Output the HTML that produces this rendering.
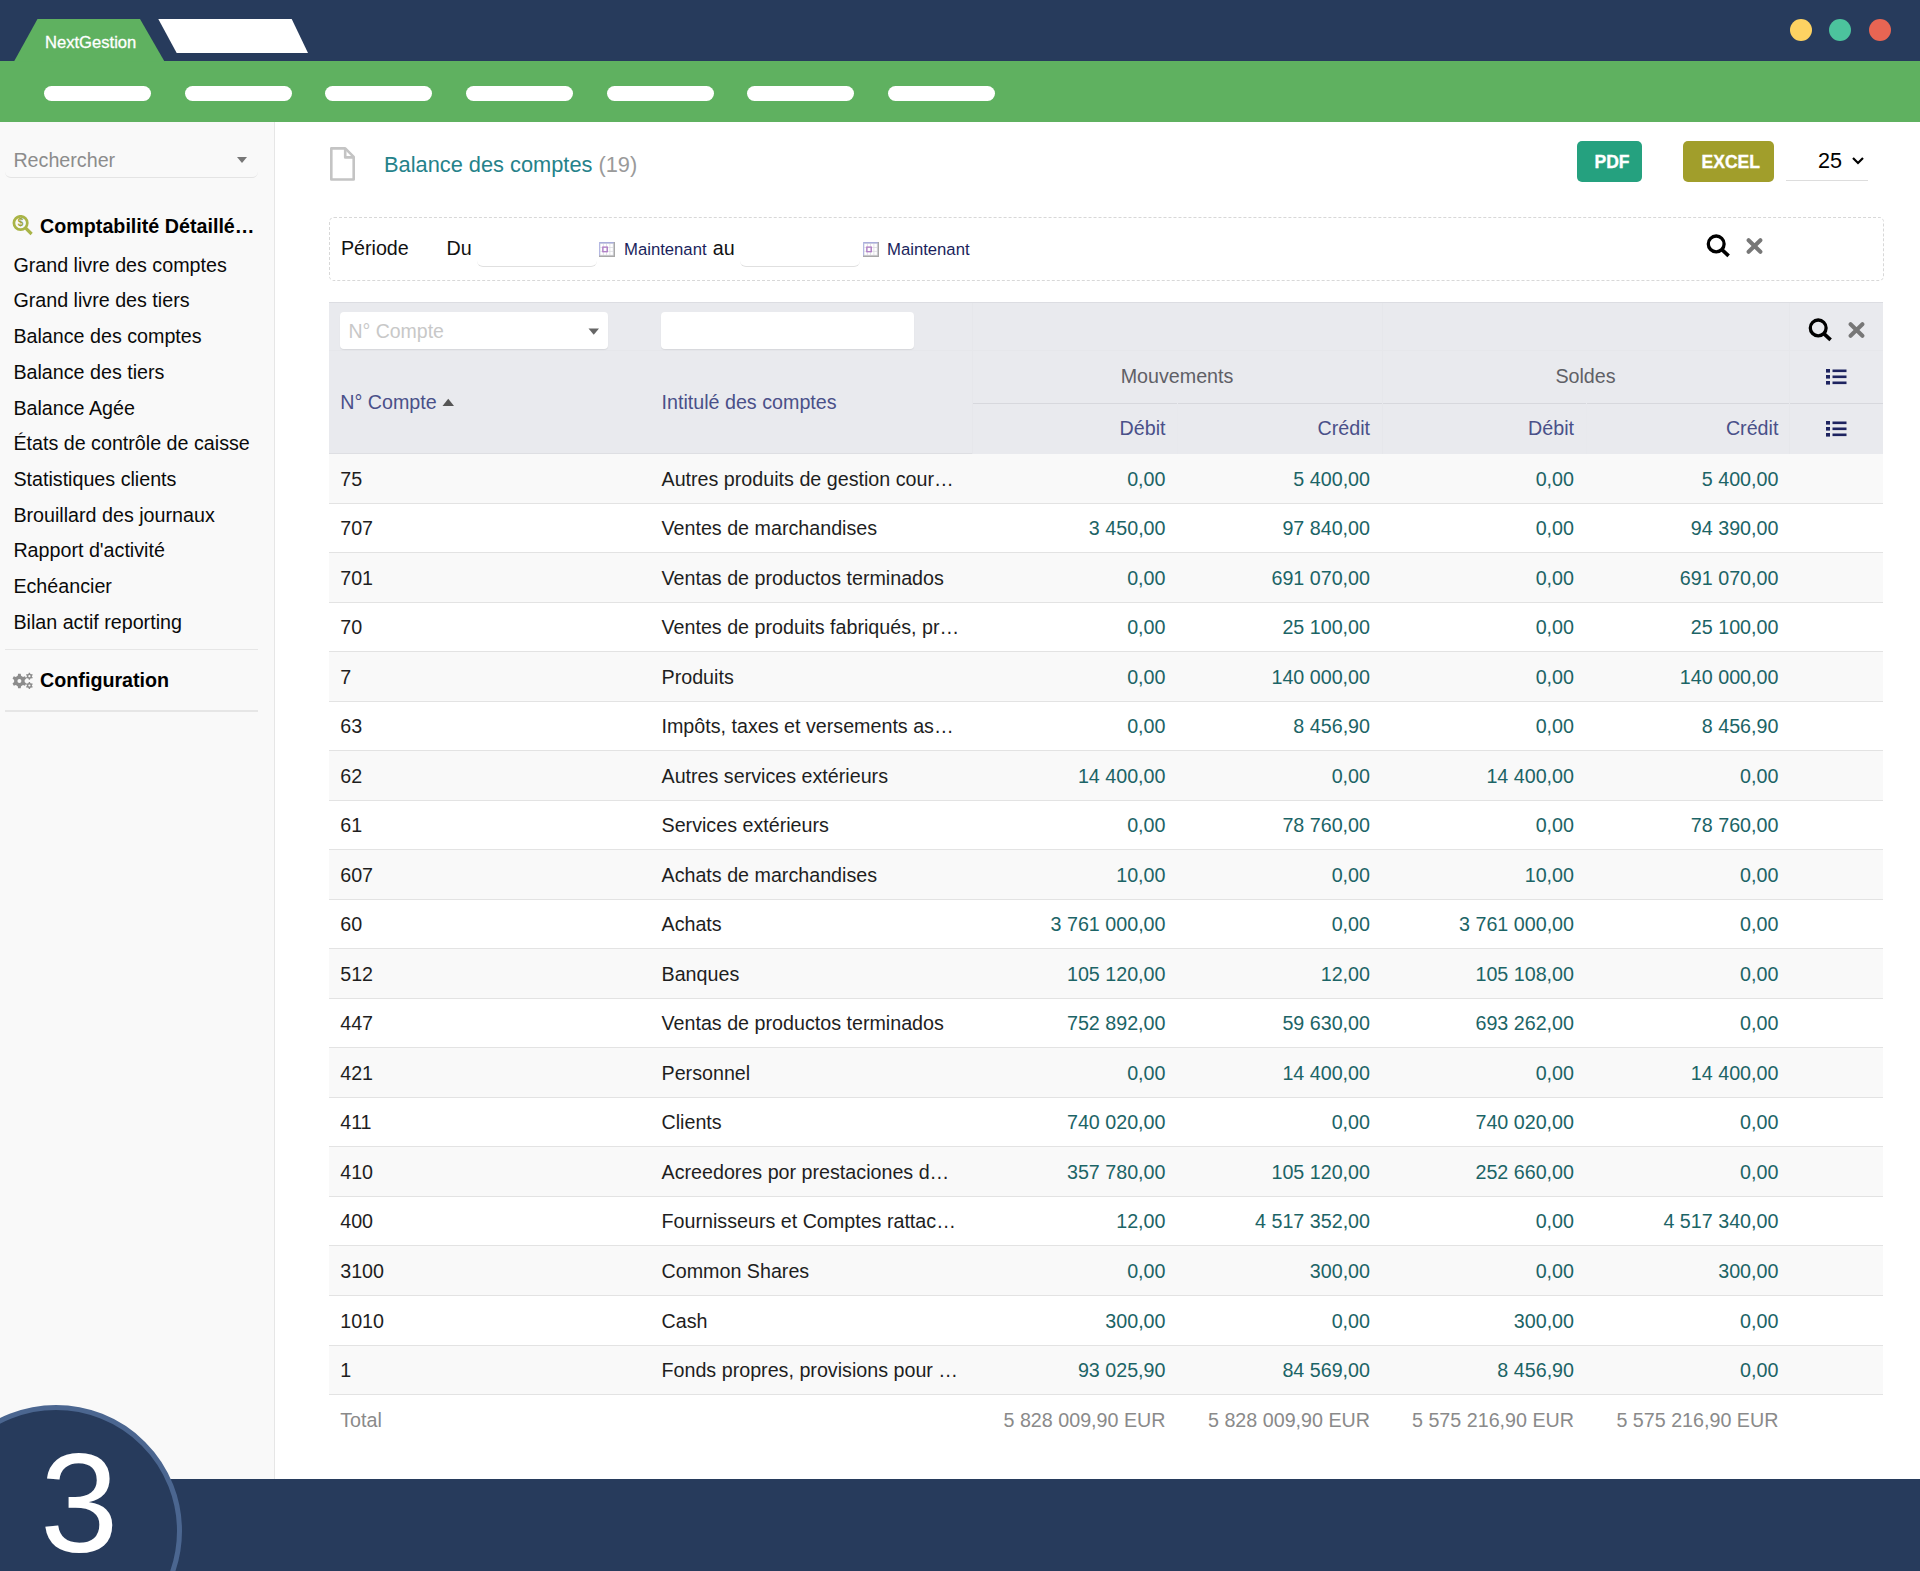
<!DOCTYPE html>
<html><head><meta charset="utf-8"><title>Balance des comptes</title>
<style>
html,body{margin:0;padding:0;}
body{width:1920px;height:1571px;position:relative;overflow:hidden;background:#fff;font-family:"Liberation Sans",sans-serif;}
.t{position:absolute;white-space:nowrap;line-height:1;}
svg{display:block}
</style></head><body>
<div style="position:absolute;left:0px;top:0px;width:1920px;height:61px;background:#273b5c"></div>
<div style="position:absolute;left:0px;top:61px;width:1920px;height:61px;background:#5fb160"></div>
<svg style="position:absolute;left:0;top:0" width="400" height="62"><polygon points="14,61.5 37.5,19 140,19 164.5,61.5" fill="#5fb160"/><polygon points="158.3,19 291.7,19 308,53 176.7,53" fill="#fff"/></svg>
<div class="t" style="left:45.00px;top:34.75px;font-size:16.6px;color:#fff;-webkit-text-stroke:0.3px #fff;">NextGestion</div>
<div style="position:absolute;left:44.0px;top:86px;width:107px;height:15px;background:#fff;border-radius:8px"></div>
<div style="position:absolute;left:184.67px;top:86px;width:107px;height:15px;background:#fff;border-radius:8px"></div>
<div style="position:absolute;left:325.34px;top:86px;width:107px;height:15px;background:#fff;border-radius:8px"></div>
<div style="position:absolute;left:466.01px;top:86px;width:107px;height:15px;background:#fff;border-radius:8px"></div>
<div style="position:absolute;left:606.68px;top:86px;width:107px;height:15px;background:#fff;border-radius:8px"></div>
<div style="position:absolute;left:747.35px;top:86px;width:107px;height:15px;background:#fff;border-radius:8px"></div>
<div style="position:absolute;left:888.02px;top:86px;width:107px;height:15px;background:#fff;border-radius:8px"></div>
<div style="position:absolute;left:1790px;top:19px;width:22px;height:22px;background:#fdd262;border-radius:50%"></div>
<div style="position:absolute;left:1829px;top:19px;width:22px;height:22px;background:#4cc39d;border-radius:50%"></div>
<div style="position:absolute;left:1869px;top:19px;width:22px;height:22px;background:#e86553;border-radius:50%"></div>
<div style="position:absolute;left:0px;top:122px;width:274px;height:1357px;background:#f9f9f9"></div>
<div style="position:absolute;left:274px;top:122px;width:1px;height:1357px;background:#e6e6e6"></div>
<div class="t" style="left:13.40px;top:151.02px;font-size:19.7px;color:#8c8c8c;">Rechercher</div>
<svg style="position:absolute;left:236px;top:156px" width="12" height="8"><polygon points="1,1 11,1 6,7" fill="#777"/></svg>
<div style="position:absolute;left:5px;top:168px;width:253px;height:10px;box-sizing:border-box;border-bottom:1.8px solid #e4e4e4;border-radius:0 0 6px 6px"></div>
<svg style="position:absolute;left:12px;top:215px" width="22" height="21" viewBox="0 0 22 21">
<circle cx="8.6" cy="8" r="6.7" fill="none" stroke="#a9b447" stroke-width="2.7"/>
<line x1="13.2" y1="12.6" x2="19.6" y2="19" stroke="#a9b447" stroke-width="3.2"/>
<text x="8.6" y="11.2" font-size="10" font-weight="bold" text-anchor="middle" fill="#9aa43f" font-family="Liberation Sans">$</text>
</svg>
<div class="t" style="left:40.10px;top:216.92px;font-size:19.7px;color:#000;font-weight:bold;">Comptabilité Détaillé…</div>
<div class="t" style="left:13.40px;top:255.62px;font-size:19.7px;color:#0a0a0a;">Grand livre des comptes</div>
<div class="t" style="left:13.40px;top:291.35px;font-size:19.7px;color:#0a0a0a;">Grand livre des tiers</div>
<div class="t" style="left:13.40px;top:327.08px;font-size:19.7px;color:#0a0a0a;">Balance des comptes</div>
<div class="t" style="left:13.40px;top:362.81px;font-size:19.7px;color:#0a0a0a;">Balance des tiers</div>
<div class="t" style="left:13.40px;top:398.54px;font-size:19.7px;color:#0a0a0a;">Balance Agée</div>
<div class="t" style="left:13.40px;top:434.27px;font-size:19.7px;color:#0a0a0a;">États de contrôle de caisse</div>
<div class="t" style="left:13.40px;top:470.00px;font-size:19.7px;color:#0a0a0a;">Statistiques clients</div>
<div class="t" style="left:13.40px;top:505.73px;font-size:19.7px;color:#0a0a0a;">Brouillard des journaux</div>
<div class="t" style="left:13.40px;top:541.46px;font-size:19.7px;color:#0a0a0a;">Rapport d&#x27;activité</div>
<div class="t" style="left:13.40px;top:577.19px;font-size:19.7px;color:#0a0a0a;">Echéancier</div>
<div class="t" style="left:13.40px;top:612.92px;font-size:19.7px;color:#0a0a0a;">Bilan actif reporting</div>
<div style="position:absolute;left:5px;top:648.7px;width:253px;height:1.6px;background:#e6e6e6"></div>
<svg style="position:absolute;left:12px;top:672px" width="22" height="18" viewBox="0 0 22 18"><path fill-rule="evenodd" fill="#8c8c8c" d="M5.73 3.86 L6.11 1.82 L8.69 1.82 L9.07 3.86 L11.01 4.99 L12.98 4.29 L14.27 6.53 L12.68 7.88 L12.68 10.12 L14.27 11.47 L12.98 13.71 L11.01 13.01 L9.07 14.14 L8.69 16.18 L6.11 16.18 L5.73 14.14 L3.79 13.01 L1.82 13.71 L0.53 11.47 L2.12 10.12 L2.12 7.88 L0.53 6.53 L1.82 4.29 L3.79 4.99 Z M9.40 9.00 A2.0 2.0 0 1 0 5.40 9.00 A2.0 2.0 0 1 0 9.40 9.00 Z M16.60 1.73 L16.76 0.66 L18.04 0.66 L18.20 1.73 L19.14 2.27 L20.15 1.88 L20.79 2.98 L19.94 3.66 L19.94 4.74 L20.79 5.42 L20.15 6.52 L19.14 6.13 L18.20 6.67 L18.04 7.74 L16.76 7.74 L16.60 6.67 L15.66 6.13 L14.65 6.52 L14.01 5.42 L14.86 4.74 L14.86 3.66 L14.01 2.98 L14.65 1.88 L15.66 2.27 Z M18.50 4.20 A1.1 1.1 0 1 0 16.30 4.20 A1.1 1.1 0 1 0 18.50 4.20 Z M16.60 11.03 L16.76 9.96 L18.04 9.96 L18.20 11.03 L19.14 11.57 L20.15 11.18 L20.79 12.28 L19.94 12.96 L19.94 14.04 L20.79 14.72 L20.15 15.82 L19.14 15.43 L18.20 15.97 L18.04 17.04 L16.76 17.04 L16.60 15.97 L15.66 15.43 L14.65 15.82 L14.01 14.72 L14.86 14.04 L14.86 12.96 L14.01 12.28 L14.65 11.18 L15.66 11.57 Z M18.50 13.50 A1.1 1.1 0 1 0 16.30 13.50 A1.1 1.1 0 1 0 18.50 13.50 Z"/></svg>
<div class="t" style="left:40.10px;top:670.62px;font-size:19.7px;color:#000;font-weight:bold;">Configuration</div>
<div style="position:absolute;left:5px;top:710.3px;width:253px;height:1.6px;background:#e6e6e6"></div>
<svg style="position:absolute;left:329px;top:146px" width="28" height="37" viewBox="0 0 28 37">
<path d="M2.3 2.4 H16.2 L24.7 10.9 V33.5 H2.3 Z" fill="none" stroke="#c4c4c4" stroke-width="2.6" stroke-linejoin="round"/>
<path d="M16.2 2.4 V11.4 H24.7" fill="none" stroke="#c4c4c4" stroke-width="2.6" stroke-linejoin="round"/>
</svg>
<div class="t" style="left:384.00px;top:154.35px;font-size:21.8px;color:#25828a;">Balance des comptes <span style="color:#9a9a9a">(19)</span></div>
<div style="position:absolute;left:1577px;top:141px;width:65px;height:41px;background:#25a17f;border-radius:5px"></div>
<div class="t" style="left:1112.00px;width:1000px;text-align:center;top:153.69px;font-size:17.5px;color:#fff;font-weight:bold;-webkit-text-stroke:0.35px #fff;">PDF</div>
<div style="position:absolute;left:1683px;top:141px;width:90.5px;height:41px;background:#a19e2b;border-radius:5px"></div>
<div class="t" style="left:1230.80px;width:1000px;text-align:center;top:153.69px;font-size:17.5px;color:#fff;font-weight:bold;-webkit-text-stroke:0.35px #fff;">EXCEL</div>
<div class="t" style="left:1818.00px;top:150.22px;font-size:21.6px;color:#000;">25</div>
<svg style="position:absolute;left:1851px;top:156px" width="14" height="10"><polyline points="2,2 7,7 12,2" fill="none" stroke="#000" stroke-width="2.2"/></svg>
<div style="position:absolute;left:1786px;top:180px;width:82px;height:1px;background:#ddd"></div>
<div style="position:absolute;left:329px;top:216.5px;width:1554.5px;height:64px;border:1px dashed #d8d8d8;border-radius:5px;box-sizing:border-box"></div>
<div class="t" style="left:340.90px;top:239.02px;font-size:19.7px;color:#111;">Période</div>
<div class="t" style="left:446.60px;top:239.02px;font-size:19.7px;color:#111;">Du</div>
<div style="position:absolute;left:476.5px;top:257px;width:120px;height:10px;box-sizing:border-box;border-bottom:1.6px solid #e0e0e0;border-radius:0 0 6px 6px"></div>
<div style="position:absolute;left:740px;top:257px;width:119.5px;height:10px;box-sizing:border-box;border-bottom:1.6px solid #e0e0e0;border-radius:0 0 6px 6px"></div>
<svg style="position:absolute;left:599px;top:242px" width="16" height="15" viewBox="0 0 16 15"><rect x="0" y="0" width="16" height="15" fill="#dcdce2"/><rect x="1.40" y="1.90" width="2.5" height="3.1" fill="#fff"/><rect x="1.40" y="5.80" width="2.5" height="3.1" fill="#fff"/><rect x="1.40" y="9.70" width="2.5" height="3.1" fill="#fff"/><rect x="4.70" y="1.90" width="2.5" height="3.1" fill="#fff"/><rect x="4.70" y="5.80" width="2.5" height="3.1" fill="#fff"/><rect x="4.70" y="9.70" width="2.5" height="3.1" fill="#fff"/><rect x="8.00" y="1.90" width="2.5" height="3.1" fill="#fff"/><rect x="8.00" y="5.80" width="2.5" height="3.1" fill="#fff"/><rect x="8.00" y="9.70" width="2.5" height="3.1" fill="#fff"/><rect x="11.30" y="1.90" width="2.5" height="3.1" fill="#fff"/><rect x="11.30" y="5.80" width="2.5" height="3.1" fill="#fff"/><rect x="11.30" y="9.70" width="2.5" height="3.1" fill="#fff"/><rect x="0" y="0" width="16" height="1.4" fill="#a9addb"/><rect x="0" y="0" width="1.1" height="15" fill="#b4b8e2"/><rect x="14.7" y="0" width="1.3" height="15" fill="#a8a8a8"/><rect x="0" y="13.6" width="16" height="1.4" fill="#a8a8a8"/><rect x="3.8" y="5.1" width="4.5" height="4.6" fill="none" stroke="#b07cc6" stroke-width="1.3"/></svg>
<svg style="position:absolute;left:863px;top:242px" width="16" height="15" viewBox="0 0 16 15"><rect x="0" y="0" width="16" height="15" fill="#dcdce2"/><rect x="1.40" y="1.90" width="2.5" height="3.1" fill="#fff"/><rect x="1.40" y="5.80" width="2.5" height="3.1" fill="#fff"/><rect x="1.40" y="9.70" width="2.5" height="3.1" fill="#fff"/><rect x="4.70" y="1.90" width="2.5" height="3.1" fill="#fff"/><rect x="4.70" y="5.80" width="2.5" height="3.1" fill="#fff"/><rect x="4.70" y="9.70" width="2.5" height="3.1" fill="#fff"/><rect x="8.00" y="1.90" width="2.5" height="3.1" fill="#fff"/><rect x="8.00" y="5.80" width="2.5" height="3.1" fill="#fff"/><rect x="8.00" y="9.70" width="2.5" height="3.1" fill="#fff"/><rect x="11.30" y="1.90" width="2.5" height="3.1" fill="#fff"/><rect x="11.30" y="5.80" width="2.5" height="3.1" fill="#fff"/><rect x="11.30" y="9.70" width="2.5" height="3.1" fill="#fff"/><rect x="0" y="0" width="16" height="1.4" fill="#a9addb"/><rect x="0" y="0" width="1.1" height="15" fill="#b4b8e2"/><rect x="14.7" y="0" width="1.3" height="15" fill="#a8a8a8"/><rect x="0" y="13.6" width="16" height="1.4" fill="#a8a8a8"/><rect x="3.8" y="5.1" width="4.5" height="4.6" fill="none" stroke="#b07cc6" stroke-width="1.3"/></svg>
<div class="t" style="left:624.00px;top:241.56px;font-size:16.7px;color:#1b1f5c;">Maintenant</div>
<div class="t" style="left:712.70px;top:239.02px;font-size:19.7px;color:#111;">au</div>
<div class="t" style="left:887.00px;top:241.56px;font-size:16.7px;color:#1b1f5c;">Maintenant</div>
<svg style="position:absolute;left:1706px;top:234px" width="25" height="24" viewBox="0 0 25 24"><circle cx="10.2" cy="9.9" r="7.9" fill="none" stroke="#000" stroke-width="3.3"/><line x1="15.6" y1="15.4" x2="22.6" y2="21.8" stroke="#000" stroke-width="3.7" stroke-linecap="butt"/></svg>
<svg style="position:absolute;left:1746px;top:238px" width="17" height="16" viewBox="0 0 17 16"><path d="M2.6 2.2 L14.4 13.8 M14.4 2.2 L2.6 13.8" stroke="#777" stroke-width="4" stroke-linecap="round"/></svg>
<div style="position:absolute;left:329px;top:302.5px;width:1554px;height:151px;background:#e9eaee"></div>
<div style="position:absolute;left:329px;top:302px;width:1554px;height:1px;background:#dcdde2"></div>
<div style="position:absolute;left:329px;top:350px;width:1554px;height:1px;background:#e6e7eb"></div>
<div style="position:absolute;left:972px;top:403px;width:911px;height:1px;background:#d7d8dd"></div>
<div style="position:absolute;left:972px;top:303px;width:1px;height:151px;background:#e6e7eb"></div>
<div style="position:absolute;left:1382px;top:303px;width:1px;height:151px;background:#e6e7eb"></div>
<div style="position:absolute;left:1789px;top:303px;width:1px;height:151px;background:#e6e7eb"></div>
<div style="position:absolute;left:1177px;top:403px;width:1px;height:51px;background:#e8e9ed"></div>
<div style="position:absolute;left:1586px;top:403px;width:1px;height:51px;background:#e8e9ed"></div>
<div style="position:absolute;left:329px;top:453px;width:643px;height:1px;background:#dedfe3"></div>
<div style="position:absolute;left:339.7px;top:312px;width:268.7px;height:37px;background:#fff;border-radius:4px;box-shadow:0 1px 1px rgba(0,0,0,0.08)"></div>
<div class="t" style="left:348.40px;top:322.49px;font-size:19.5px;color:#c8c8c8;">N° Compte</div>
<svg style="position:absolute;left:588px;top:328px" width="12" height="8"><polygon points="0.5,0.5 11,0.5 5.75,6.8" fill="#666"/></svg>
<div style="position:absolute;left:661px;top:312px;width:253px;height:37px;background:#fff;border-radius:4px;box-shadow:0 1px 1px rgba(0,0,0,0.08)"></div>
<svg style="position:absolute;left:1807.6px;top:318px" width="25" height="24" viewBox="0 0 25 24"><circle cx="10.2" cy="9.9" r="7.9" fill="none" stroke="#000" stroke-width="3.3"/><line x1="15.6" y1="15.4" x2="22.6" y2="21.8" stroke="#000" stroke-width="3.7" stroke-linecap="butt"/></svg>
<svg style="position:absolute;left:1847.5px;top:321.5px" width="17" height="16" viewBox="0 0 17 16"><path d="M2.6 2.2 L14.4 13.8 M14.4 2.2 L2.6 13.8" stroke="#777" stroke-width="4" stroke-linecap="round"/></svg>
<div class="t" style="left:340.20px;top:393.12px;font-size:19.7px;color:#4a5089;">N° Compte</div>
<svg style="position:absolute;left:442px;top:398px" width="13" height="9"><polygon points="0.5,8 12,8 6.25,0.8" fill="#555"/></svg>
<div class="t" style="left:661.50px;top:393.12px;font-size:19.7px;color:#4a5089;">Intitulé des comptes</div>
<div class="t" style="left:677.00px;width:1000px;text-align:center;top:367.12px;font-size:19.7px;color:#5f6066;">Mouvements</div>
<div class="t" style="left:1085.50px;width:1000px;text-align:center;top:367.12px;font-size:19.7px;color:#5f6066;">Soldes</div>
<div class="t" style="right:754.50px;top:419.12px;font-size:19.7px;color:#4a5089;">Débit</div>
<div class="t" style="right:550.00px;top:419.12px;font-size:19.7px;color:#4a5089;">Crédit</div>
<div class="t" style="right:346.00px;top:419.12px;font-size:19.7px;color:#4a5089;">Débit</div>
<div class="t" style="right:141.60px;top:419.12px;font-size:19.7px;color:#4a5089;">Crédit</div>
<svg style="position:absolute;left:1826px;top:369px" width="21" height="16" viewBox="0 0 21 16"><g fill="#1e2460"><rect x="0" y="0" width="4" height="3.6"/><rect x="0" y="6" width="4" height="3.6"/><rect x="0" y="12" width="4" height="3.6"/><rect x="6.5" y="0.5" width="14" height="2.6"/><rect x="6.5" y="6.5" width="14" height="2.6"/><rect x="6.5" y="12.5" width="14" height="2.6"/></g></svg>
<svg style="position:absolute;left:1826px;top:421px" width="21" height="16" viewBox="0 0 21 16"><g fill="#1e2460"><rect x="0" y="0" width="4" height="3.6"/><rect x="0" y="6" width="4" height="3.6"/><rect x="0" y="12" width="4" height="3.6"/><rect x="6.5" y="0.5" width="14" height="2.6"/><rect x="6.5" y="6.5" width="14" height="2.6"/><rect x="6.5" y="12.5" width="14" height="2.6"/></g></svg>
<div style="position:absolute;left:329px;top:453.5px;width:1554px;height:50.03px;background:#f9f9f9"></div>
<div style="position:absolute;left:329px;top:503.03px;width:1554px;height:50.03px;background:#fff"></div>
<div style="position:absolute;left:329px;top:552.56px;width:1554px;height:50.03px;background:#f9f9f9"></div>
<div style="position:absolute;left:329px;top:602.09px;width:1554px;height:50.03px;background:#fff"></div>
<div style="position:absolute;left:329px;top:651.62px;width:1554px;height:50.03px;background:#f9f9f9"></div>
<div style="position:absolute;left:329px;top:701.15px;width:1554px;height:50.03px;background:#fff"></div>
<div style="position:absolute;left:329px;top:750.68px;width:1554px;height:50.03px;background:#f9f9f9"></div>
<div style="position:absolute;left:329px;top:800.21px;width:1554px;height:50.03px;background:#fff"></div>
<div style="position:absolute;left:329px;top:849.74px;width:1554px;height:50.03px;background:#f9f9f9"></div>
<div style="position:absolute;left:329px;top:899.27px;width:1554px;height:50.03px;background:#fff"></div>
<div style="position:absolute;left:329px;top:948.8px;width:1554px;height:50.03px;background:#f9f9f9"></div>
<div style="position:absolute;left:329px;top:998.33px;width:1554px;height:50.03px;background:#fff"></div>
<div style="position:absolute;left:329px;top:1047.86px;width:1554px;height:50.03px;background:#f9f9f9"></div>
<div style="position:absolute;left:329px;top:1097.39px;width:1554px;height:50.03px;background:#fff"></div>
<div style="position:absolute;left:329px;top:1146.92px;width:1554px;height:50.03px;background:#f9f9f9"></div>
<div style="position:absolute;left:329px;top:1196.45px;width:1554px;height:50.03px;background:#fff"></div>
<div style="position:absolute;left:329px;top:1245.98px;width:1554px;height:50.03px;background:#f9f9f9"></div>
<div style="position:absolute;left:329px;top:1295.51px;width:1554px;height:50.03px;background:#fff"></div>
<div style="position:absolute;left:329px;top:1345.04px;width:1554px;height:50.03px;background:#f9f9f9"></div>
<div style="position:absolute;left:329px;top:502.53px;width:1554px;height:1px;background:#e3e3e3"></div>
<div style="position:absolute;left:329px;top:552.06px;width:1554px;height:1px;background:#e3e3e3"></div>
<div style="position:absolute;left:329px;top:601.59px;width:1554px;height:1px;background:#e3e3e3"></div>
<div style="position:absolute;left:329px;top:651.12px;width:1554px;height:1px;background:#e3e3e3"></div>
<div style="position:absolute;left:329px;top:700.65px;width:1554px;height:1px;background:#e3e3e3"></div>
<div style="position:absolute;left:329px;top:750.18px;width:1554px;height:1px;background:#e3e3e3"></div>
<div style="position:absolute;left:329px;top:799.71px;width:1554px;height:1px;background:#e3e3e3"></div>
<div style="position:absolute;left:329px;top:849.24px;width:1554px;height:1px;background:#e3e3e3"></div>
<div style="position:absolute;left:329px;top:898.77px;width:1554px;height:1px;background:#e3e3e3"></div>
<div style="position:absolute;left:329px;top:948.3px;width:1554px;height:1px;background:#e3e3e3"></div>
<div style="position:absolute;left:329px;top:997.83px;width:1554px;height:1px;background:#e3e3e3"></div>
<div style="position:absolute;left:329px;top:1047.36px;width:1554px;height:1px;background:#e3e3e3"></div>
<div style="position:absolute;left:329px;top:1096.89px;width:1554px;height:1px;background:#e3e3e3"></div>
<div style="position:absolute;left:329px;top:1146.42px;width:1554px;height:1px;background:#e3e3e3"></div>
<div style="position:absolute;left:329px;top:1195.95px;width:1554px;height:1px;background:#e3e3e3"></div>
<div style="position:absolute;left:329px;top:1245.48px;width:1554px;height:1px;background:#e3e3e3"></div>
<div style="position:absolute;left:329px;top:1295.01px;width:1554px;height:1px;background:#e3e3e3"></div>
<div style="position:absolute;left:329px;top:1344.54px;width:1554px;height:1px;background:#e3e3e3"></div>
<div style="position:absolute;left:329px;top:1394.07px;width:1554px;height:1px;background:#e3e3e3"></div>
<div class="t" style="left:340.20px;top:469.52px;font-size:19.7px;color:#1e1e1e;">75</div>
<div class="t" style="left:661.50px;top:469.52px;font-size:19.7px;color:#1e1e1e;">Autres produits de gestion cour…</div>
<div class="t" style="right:754.50px;top:469.52px;font-size:19.7px;color:#1c6466;">0,00</div>
<div class="t" style="right:550.00px;top:469.52px;font-size:19.7px;color:#1c6466;">5 400,00</div>
<div class="t" style="right:346.00px;top:469.52px;font-size:19.7px;color:#1c6466;">0,00</div>
<div class="t" style="right:141.60px;top:469.52px;font-size:19.7px;color:#1c6466;">5 400,00</div>
<div class="t" style="left:340.20px;top:519.05px;font-size:19.7px;color:#1e1e1e;">707</div>
<div class="t" style="left:661.50px;top:519.05px;font-size:19.7px;color:#1e1e1e;">Ventes de marchandises</div>
<div class="t" style="right:754.50px;top:519.05px;font-size:19.7px;color:#1c6466;">3 450,00</div>
<div class="t" style="right:550.00px;top:519.05px;font-size:19.7px;color:#1c6466;">97 840,00</div>
<div class="t" style="right:346.00px;top:519.05px;font-size:19.7px;color:#1c6466;">0,00</div>
<div class="t" style="right:141.60px;top:519.05px;font-size:19.7px;color:#1c6466;">94 390,00</div>
<div class="t" style="left:340.20px;top:568.58px;font-size:19.7px;color:#1e1e1e;">701</div>
<div class="t" style="left:661.50px;top:568.58px;font-size:19.7px;color:#1e1e1e;">Ventas de productos terminados</div>
<div class="t" style="right:754.50px;top:568.58px;font-size:19.7px;color:#1c6466;">0,00</div>
<div class="t" style="right:550.00px;top:568.58px;font-size:19.7px;color:#1c6466;">691 070,00</div>
<div class="t" style="right:346.00px;top:568.58px;font-size:19.7px;color:#1c6466;">0,00</div>
<div class="t" style="right:141.60px;top:568.58px;font-size:19.7px;color:#1c6466;">691 070,00</div>
<div class="t" style="left:340.20px;top:618.11px;font-size:19.7px;color:#1e1e1e;">70</div>
<div class="t" style="left:661.50px;top:618.11px;font-size:19.7px;color:#1e1e1e;">Ventes de produits fabriqués, pr…</div>
<div class="t" style="right:754.50px;top:618.11px;font-size:19.7px;color:#1c6466;">0,00</div>
<div class="t" style="right:550.00px;top:618.11px;font-size:19.7px;color:#1c6466;">25 100,00</div>
<div class="t" style="right:346.00px;top:618.11px;font-size:19.7px;color:#1c6466;">0,00</div>
<div class="t" style="right:141.60px;top:618.11px;font-size:19.7px;color:#1c6466;">25 100,00</div>
<div class="t" style="left:340.20px;top:667.64px;font-size:19.7px;color:#1e1e1e;">7</div>
<div class="t" style="left:661.50px;top:667.64px;font-size:19.7px;color:#1e1e1e;">Produits</div>
<div class="t" style="right:754.50px;top:667.64px;font-size:19.7px;color:#1c6466;">0,00</div>
<div class="t" style="right:550.00px;top:667.64px;font-size:19.7px;color:#1c6466;">140 000,00</div>
<div class="t" style="right:346.00px;top:667.64px;font-size:19.7px;color:#1c6466;">0,00</div>
<div class="t" style="right:141.60px;top:667.64px;font-size:19.7px;color:#1c6466;">140 000,00</div>
<div class="t" style="left:340.20px;top:717.17px;font-size:19.7px;color:#1e1e1e;">63</div>
<div class="t" style="left:661.50px;top:717.17px;font-size:19.7px;color:#1e1e1e;">Impôts, taxes et versements as…</div>
<div class="t" style="right:754.50px;top:717.17px;font-size:19.7px;color:#1c6466;">0,00</div>
<div class="t" style="right:550.00px;top:717.17px;font-size:19.7px;color:#1c6466;">8 456,90</div>
<div class="t" style="right:346.00px;top:717.17px;font-size:19.7px;color:#1c6466;">0,00</div>
<div class="t" style="right:141.60px;top:717.17px;font-size:19.7px;color:#1c6466;">8 456,90</div>
<div class="t" style="left:340.20px;top:766.70px;font-size:19.7px;color:#1e1e1e;">62</div>
<div class="t" style="left:661.50px;top:766.70px;font-size:19.7px;color:#1e1e1e;">Autres services extérieurs</div>
<div class="t" style="right:754.50px;top:766.70px;font-size:19.7px;color:#1c6466;">14 400,00</div>
<div class="t" style="right:550.00px;top:766.70px;font-size:19.7px;color:#1c6466;">0,00</div>
<div class="t" style="right:346.00px;top:766.70px;font-size:19.7px;color:#1c6466;">14 400,00</div>
<div class="t" style="right:141.60px;top:766.70px;font-size:19.7px;color:#1c6466;">0,00</div>
<div class="t" style="left:340.20px;top:816.23px;font-size:19.7px;color:#1e1e1e;">61</div>
<div class="t" style="left:661.50px;top:816.23px;font-size:19.7px;color:#1e1e1e;">Services extérieurs</div>
<div class="t" style="right:754.50px;top:816.23px;font-size:19.7px;color:#1c6466;">0,00</div>
<div class="t" style="right:550.00px;top:816.23px;font-size:19.7px;color:#1c6466;">78 760,00</div>
<div class="t" style="right:346.00px;top:816.23px;font-size:19.7px;color:#1c6466;">0,00</div>
<div class="t" style="right:141.60px;top:816.23px;font-size:19.7px;color:#1c6466;">78 760,00</div>
<div class="t" style="left:340.20px;top:865.76px;font-size:19.7px;color:#1e1e1e;">607</div>
<div class="t" style="left:661.50px;top:865.76px;font-size:19.7px;color:#1e1e1e;">Achats de marchandises</div>
<div class="t" style="right:754.50px;top:865.76px;font-size:19.7px;color:#1c6466;">10,00</div>
<div class="t" style="right:550.00px;top:865.76px;font-size:19.7px;color:#1c6466;">0,00</div>
<div class="t" style="right:346.00px;top:865.76px;font-size:19.7px;color:#1c6466;">10,00</div>
<div class="t" style="right:141.60px;top:865.76px;font-size:19.7px;color:#1c6466;">0,00</div>
<div class="t" style="left:340.20px;top:915.29px;font-size:19.7px;color:#1e1e1e;">60</div>
<div class="t" style="left:661.50px;top:915.29px;font-size:19.7px;color:#1e1e1e;">Achats</div>
<div class="t" style="right:754.50px;top:915.29px;font-size:19.7px;color:#1c6466;">3 761 000,00</div>
<div class="t" style="right:550.00px;top:915.29px;font-size:19.7px;color:#1c6466;">0,00</div>
<div class="t" style="right:346.00px;top:915.29px;font-size:19.7px;color:#1c6466;">3 761 000,00</div>
<div class="t" style="right:141.60px;top:915.29px;font-size:19.7px;color:#1c6466;">0,00</div>
<div class="t" style="left:340.20px;top:964.82px;font-size:19.7px;color:#1e1e1e;">512</div>
<div class="t" style="left:661.50px;top:964.82px;font-size:19.7px;color:#1e1e1e;">Banques</div>
<div class="t" style="right:754.50px;top:964.82px;font-size:19.7px;color:#1c6466;">105 120,00</div>
<div class="t" style="right:550.00px;top:964.82px;font-size:19.7px;color:#1c6466;">12,00</div>
<div class="t" style="right:346.00px;top:964.82px;font-size:19.7px;color:#1c6466;">105 108,00</div>
<div class="t" style="right:141.60px;top:964.82px;font-size:19.7px;color:#1c6466;">0,00</div>
<div class="t" style="left:340.20px;top:1014.35px;font-size:19.7px;color:#1e1e1e;">447</div>
<div class="t" style="left:661.50px;top:1014.35px;font-size:19.7px;color:#1e1e1e;">Ventas de productos terminados</div>
<div class="t" style="right:754.50px;top:1014.35px;font-size:19.7px;color:#1c6466;">752 892,00</div>
<div class="t" style="right:550.00px;top:1014.35px;font-size:19.7px;color:#1c6466;">59 630,00</div>
<div class="t" style="right:346.00px;top:1014.35px;font-size:19.7px;color:#1c6466;">693 262,00</div>
<div class="t" style="right:141.60px;top:1014.35px;font-size:19.7px;color:#1c6466;">0,00</div>
<div class="t" style="left:340.20px;top:1063.88px;font-size:19.7px;color:#1e1e1e;">421</div>
<div class="t" style="left:661.50px;top:1063.88px;font-size:19.7px;color:#1e1e1e;">Personnel</div>
<div class="t" style="right:754.50px;top:1063.88px;font-size:19.7px;color:#1c6466;">0,00</div>
<div class="t" style="right:550.00px;top:1063.88px;font-size:19.7px;color:#1c6466;">14 400,00</div>
<div class="t" style="right:346.00px;top:1063.88px;font-size:19.7px;color:#1c6466;">0,00</div>
<div class="t" style="right:141.60px;top:1063.88px;font-size:19.7px;color:#1c6466;">14 400,00</div>
<div class="t" style="left:340.20px;top:1113.41px;font-size:19.7px;color:#1e1e1e;">411</div>
<div class="t" style="left:661.50px;top:1113.41px;font-size:19.7px;color:#1e1e1e;">Clients</div>
<div class="t" style="right:754.50px;top:1113.41px;font-size:19.7px;color:#1c6466;">740 020,00</div>
<div class="t" style="right:550.00px;top:1113.41px;font-size:19.7px;color:#1c6466;">0,00</div>
<div class="t" style="right:346.00px;top:1113.41px;font-size:19.7px;color:#1c6466;">740 020,00</div>
<div class="t" style="right:141.60px;top:1113.41px;font-size:19.7px;color:#1c6466;">0,00</div>
<div class="t" style="left:340.20px;top:1162.94px;font-size:19.7px;color:#1e1e1e;">410</div>
<div class="t" style="left:661.50px;top:1162.94px;font-size:19.7px;color:#1e1e1e;">Acreedores por prestaciones d…</div>
<div class="t" style="right:754.50px;top:1162.94px;font-size:19.7px;color:#1c6466;">357 780,00</div>
<div class="t" style="right:550.00px;top:1162.94px;font-size:19.7px;color:#1c6466;">105 120,00</div>
<div class="t" style="right:346.00px;top:1162.94px;font-size:19.7px;color:#1c6466;">252 660,00</div>
<div class="t" style="right:141.60px;top:1162.94px;font-size:19.7px;color:#1c6466;">0,00</div>
<div class="t" style="left:340.20px;top:1212.47px;font-size:19.7px;color:#1e1e1e;">400</div>
<div class="t" style="left:661.50px;top:1212.47px;font-size:19.7px;color:#1e1e1e;">Fournisseurs et Comptes rattac…</div>
<div class="t" style="right:754.50px;top:1212.47px;font-size:19.7px;color:#1c6466;">12,00</div>
<div class="t" style="right:550.00px;top:1212.47px;font-size:19.7px;color:#1c6466;">4 517 352,00</div>
<div class="t" style="right:346.00px;top:1212.47px;font-size:19.7px;color:#1c6466;">0,00</div>
<div class="t" style="right:141.60px;top:1212.47px;font-size:19.7px;color:#1c6466;">4 517 340,00</div>
<div class="t" style="left:340.20px;top:1262.00px;font-size:19.7px;color:#1e1e1e;">3100</div>
<div class="t" style="left:661.50px;top:1262.00px;font-size:19.7px;color:#1e1e1e;">Common Shares</div>
<div class="t" style="right:754.50px;top:1262.00px;font-size:19.7px;color:#1c6466;">0,00</div>
<div class="t" style="right:550.00px;top:1262.00px;font-size:19.7px;color:#1c6466;">300,00</div>
<div class="t" style="right:346.00px;top:1262.00px;font-size:19.7px;color:#1c6466;">0,00</div>
<div class="t" style="right:141.60px;top:1262.00px;font-size:19.7px;color:#1c6466;">300,00</div>
<div class="t" style="left:340.20px;top:1311.53px;font-size:19.7px;color:#1e1e1e;">1010</div>
<div class="t" style="left:661.50px;top:1311.53px;font-size:19.7px;color:#1e1e1e;">Cash</div>
<div class="t" style="right:754.50px;top:1311.53px;font-size:19.7px;color:#1c6466;">300,00</div>
<div class="t" style="right:550.00px;top:1311.53px;font-size:19.7px;color:#1c6466;">0,00</div>
<div class="t" style="right:346.00px;top:1311.53px;font-size:19.7px;color:#1c6466;">300,00</div>
<div class="t" style="right:141.60px;top:1311.53px;font-size:19.7px;color:#1c6466;">0,00</div>
<div class="t" style="left:340.20px;top:1361.06px;font-size:19.7px;color:#1e1e1e;">1</div>
<div class="t" style="left:661.50px;top:1361.06px;font-size:19.7px;color:#1e1e1e;">Fonds propres, provisions pour …</div>
<div class="t" style="right:754.50px;top:1361.06px;font-size:19.7px;color:#1c6466;">93 025,90</div>
<div class="t" style="right:550.00px;top:1361.06px;font-size:19.7px;color:#1c6466;">84 569,00</div>
<div class="t" style="right:346.00px;top:1361.06px;font-size:19.7px;color:#1c6466;">8 456,90</div>
<div class="t" style="right:141.60px;top:1361.06px;font-size:19.7px;color:#1c6466;">0,00</div>
<div class="t" style="left:340.20px;top:1410.59px;font-size:19.7px;color:#8a8a8a;">Total</div>
<div class="t" style="right:754.50px;top:1410.59px;font-size:19.7px;color:#8a8a8a;">5 828 009,90 EUR</div>
<div class="t" style="right:550.00px;top:1410.59px;font-size:19.7px;color:#8a8a8a;">5 828 009,90 EUR</div>
<div class="t" style="right:346.00px;top:1410.59px;font-size:19.7px;color:#8a8a8a;">5 575 216,90 EUR</div>
<div class="t" style="right:141.60px;top:1410.59px;font-size:19.7px;color:#8a8a8a;">5 575 216,90 EUR</div>
<div style="position:absolute;left:0px;top:1479px;width:1920px;height:92px;background:#273b5c"></div>
<div style="position:absolute;left:-70px;top:1405px;width:252px;height:252px;border-radius:50%;background:#273b5c;box-sizing:border-box;border:5px solid #4b6690"></div>
<div class="t" style="left:40.00px;top:1433.04px;font-size:141px;color:#fff;">3</div>
</body></html>
